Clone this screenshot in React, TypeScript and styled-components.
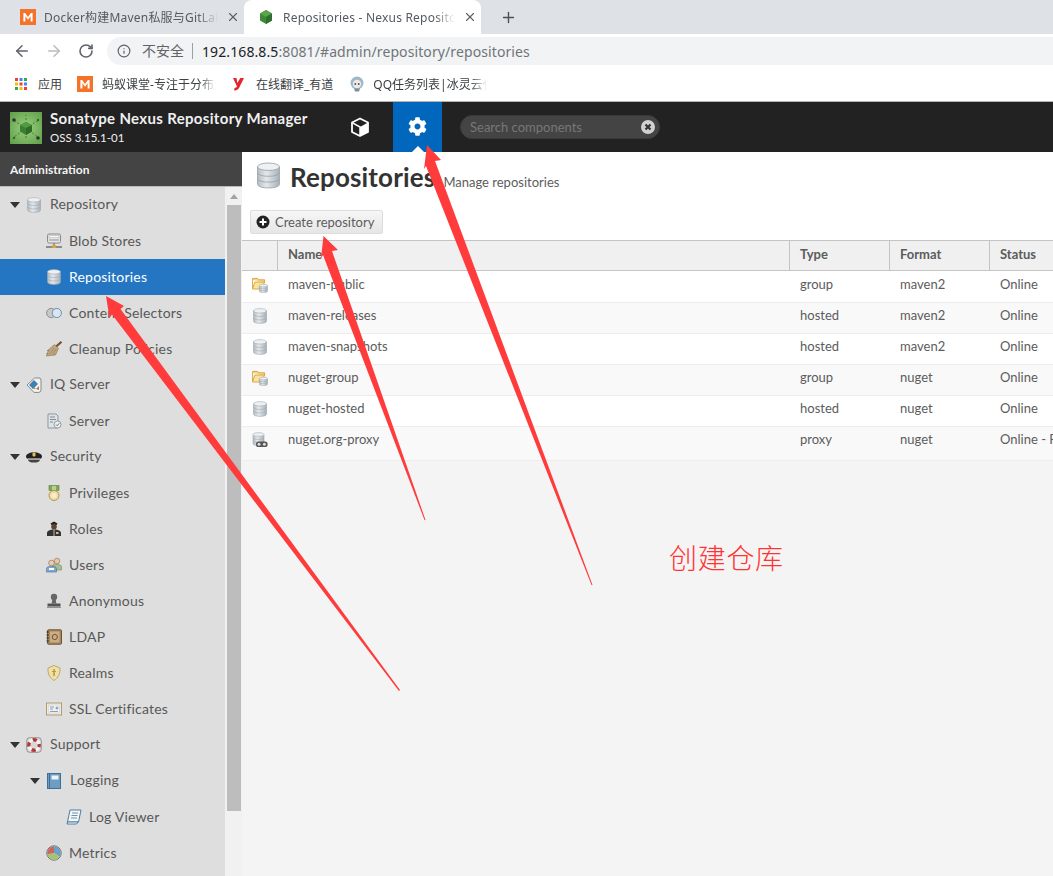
import React from "react";
import styled, { createGlobalStyle } from "styled-components";
import { ArrowLeft, ArrowRight, RotateCw, Info, X, Plus } from "lucide-react";
import { FaCog } from "react-icons/fa";

const Global = createGlobalStyle`
  html, body { margin: 0; padding: 0; background: #fff; overflow: hidden; }
  * { box-sizing: border-box; }
`;

const CHROME_FONT = `"Noto Sans", "Noto Sans CJK SC", sans-serif`;
const APP_FONT = `Lato, "Open Sans", sans-serif`;

const Page = styled.div`
  position: relative;
  width: 1053px;
  height: 876px;
  overflow: hidden;
  display: flex;
  flex-direction: column;
`;
const HiddenDefs = styled.svg`
  position: absolute;
  width: 0;
  height: 0;
`;

/* ---------- browser chrome ---------- */
const TabStrip = styled.div`
  height: 34px;
  background: #dee1e6;
  display: flex;
  align-items: stretch;
  font-family: ${CHROME_FONT};
`;
const Tab = styled.div<{ $active?: boolean }>`
  width: ${(p) => (p.$active ? 237 : 244)}px;
  padding-left: ${(p) => (p.$active ? 15 : 20)}px;
  display: flex;
  align-items: center;
  background: ${(p) => (p.$active ? "#fff" : "transparent")};
  border-radius: 8px 8px 0 0;
`;
const TabTitle = styled.span<{ $w: number; $ml: number }>`
  width: ${(p) => p.$w}px;
  margin-left: ${(p) => p.$ml}px;
  font-size: 12px;
  letter-spacing: 0.2px;
  color: #555a60;
  white-space: nowrap;
  overflow: hidden;
  mask-image: linear-gradient(to right, #000 88%, transparent);
`;
const TabClose = styled.span`
  display: flex;
  margin-left: 8px;
  color: #5f6368;
`;
const NewTab = styled.span`
  display: flex;
  align-items: center;
  margin-left: 19px;
  color: #4d5156;
`;
const Toolbar = styled.div`
  height: 33px;
  padding: 3px 0 2px 6px;
  background: #fff;
  display: flex;
  align-items: center;
  font-family: ${CHROME_FONT};
`;
const NavButton = styled.span<{ $dim?: boolean }>`
  width: 32px;
  display: flex;
  justify-content: center;
  color: ${(p) => (p.$dim ? "#b9bcc0" : "#5f6368")};
`;
const Omnibox = styled.div`
  flex: 1;
  height: 28px;
  margin-left: 5px;
  padding-left: 10px;
  background: #f1f3f4;
  border-radius: 14px 0 0 14px;
  display: flex;
  align-items: center;
  color: #5f6368;
`;
const Insecure = styled.span`
  margin-left: 11px;
  font-size: 14px;
  padding-right: 8px;
  border-right: 1px solid #9aa0a6;
  line-height: 16px;
`;
const UrlHost = styled.span`
  margin-left: 9px;
  font-size: 14px;
  letter-spacing: 0.1px;
  color: #202124;
`;
const UrlRest = styled.span`
  font-size: 14px;
  letter-spacing: 0.1px;
  color: #70757a;
`;
const Bookmarks = styled.div`
  height: 34px;
  padding-left: 15px;
  background: #fff;
  display: flex;
  align-items: center;
  font-family: ${CHROME_FONT};
`;
const Bookmark = styled.span<{ $ml: number; $w?: number; $fade?: boolean }>`
  display: block;
  margin-left: ${(p) => p.$ml}px;
  width: ${(p) => (p.$w ? `${p.$w}px` : "auto")};
  font-size: 12px;
  color: #3c4043;
  white-space: nowrap;
  overflow: hidden;
  ${(p) => (p.$fade ? "mask-image: linear-gradient(to right, #000 85%, transparent);" : "")}
`;
const BookmarkIcon = styled.span<{ $ml: number }>`
  display: flex;
  margin-left: ${(p) => p.$ml}px;
`;
const Divider = styled.div`
  height: 1px;
  background: #b4b4b4;
`;

/* ---------- nexus header ---------- */
const Header = styled.header`
  height: 50px;
  padding-left: 10px;
  background: #222;
  display: flex;
  align-items: stretch;
  font-family: ${APP_FONT};
`;
const LogoBox = styled.div`
  align-self: center;
  width: 32px;
  height: 32px;
  margin-top: 1px;
  display: flex;
`;
const Brand = styled.div`
  margin-left: 8px;
  width: 285px;
  display: flex;
  flex-direction: column;
  padding-top: 6px;
  color: #f0f0f0;
`;
const BrandName = styled.div`
  font-size: 15px;
  font-weight: 700;
  line-height: 20px;
  letter-spacing: 0.33px;
  white-space: nowrap;
`;
const BrandVersion = styled.div`
  font-size: 11.5px;
  line-height: 20px;
`;
const HeaderIcon = styled.div`
  width: 50px;
  display: flex;
  align-items: center;
  justify-content: center;
  color: #fff;
`;
const ActiveHeaderIcon = styled(HeaderIcon)`
  position: relative;
  width: 49px;
  margin-left: 8px;
  padding-bottom: 2px;
  background: #0067bd;
  &::after {
    content: "";
    position: absolute;
    left: 19px;
    bottom: 0;
    border: 6px solid transparent;
    border-top: 0;
    border-bottom-color: #fff;
  }
`;
const Search = styled.div`
  width: 200px;
  height: 24px;
  margin: 13px 0 0 18px;
  padding: 0 4px 0 9px;
  background: #444;
  border: 1px solid #3a3a3a;
  border-radius: 12px;
  display: flex;
  align-items: center;
  justify-content: space-between;
  color: #777;
  font-size: 13px;
`;
const ClearIcon = styled.span`
  display: flex;
`;

/* ---------- body ---------- */
const Body = styled.div`
  flex: 1;
  min-height: 0;
  display: flex;
  font-family: ${APP_FONT};
`;
const Sidebar = styled.aside`
  width: 242px;
  display: flex;
  flex-direction: column;
`;
const SideTitle = styled.div`
  height: 35px;
  padding: 1px 10px 0;
  display: flex;
  align-items: center;
  background: #444;
  color: #f4f4f4;
  font-size: 12px;
  font-weight: 700;
  border-bottom: 1px solid #bbb;
`;
const SideBody = styled.div`
  flex: 1;
  min-height: 0;
  display: flex;
`;
const Tree = styled.nav`
  width: 225px;
  background: #dedede;
  overflow: hidden;
`;
const TreeRow = styled.div<{ $pad: number; $selected?: boolean }>`
  height: 36px;
  padding-left: ${(p) => p.$pad}px;
  display: flex;
  align-items: center;
  background: ${(p) => (p.$selected ? "#2476c3" : "transparent")};
  color: ${(p) => (p.$selected ? "#fff" : "#585858")};
  font-size: 14px;
`;
const Caret = styled.span`
  width: 10px;
  margin-right: 6px;
  border-style: solid;
  border-width: 6px 5px 0;
  border-color: #333 transparent transparent;
`;
const NodeLabel = styled.span<{ $parent?: boolean }>`
  margin-left: ${(p) => (p.$parent ? 8 : 7)}px;
  padding-bottom: ${(p) => (p.$parent ? 4 : 2)}px;
  white-space: nowrap;
  letter-spacing: 0.2px;
`;
const Scrollbar = styled.div`
  flex: 1;
  background: #f1f1f1;
  display: flex;
  flex-direction: column;
  align-items: center;
  padding: 0 1px 0 2px;
`;
const ScrollUp = styled.span`
  margin: 7px 0 6px;
  border-style: solid;
  border-width: 0 4px 5px;
  border-color: transparent transparent #a3a3a3;
`;
const ScrollThumb = styled.div`
  width: 100%;
  height: 606px;
  background: #bdbdbd;
`;
const Main = styled.main`
  flex: 1;
  min-width: 0;
  background: #f4f4f4;
`;
const PageHead = styled.div`
  height: 88px;
  padding: 10px 0 0 8px;
  background: #fff;
`;
const TitleRow = styled.div`
  height: 48px;
  padding-left: 5px;
  display: flex;
  align-items: flex-start;
`;
const PageTitle = styled.h1`
  margin: 0 0 0 8px;
  font-size: 26px;
  line-height: 30px;
  font-weight: 700;
  letter-spacing: 0.15px;
  color: #333;
  white-space: nowrap;
`;
const PageSub = styled.span`
  margin: 12px 0 0 8px;
  font-size: 13px;
  line-height: 16px;
  color: #5c5c5c;
  white-space: nowrap;
`;
const CreateButton = styled.div`
  width: 133px;
  height: 24px;
  padding-left: 5px;
  display: flex;
  align-items: center;
  gap: 5px;
  background: linear-gradient(#f6f6f6, #e6e6e6);
  border: 1px solid #ddd;
  border-radius: 2px;
  color: #5c5c5c;
  font-size: 13px;
  white-space: nowrap;
`;
const GRID = "36px 512px 100px 100px 100px";
const TableHead = styled.div`
  height: 31px;
  display: grid;
  grid-template-columns: ${GRID};
  background: #f0f0f0;
  border-top: 1px solid #c4c4c4;
  border-bottom: 1px solid #c4c4c4;
`;
const HeadCell = styled.div`
  padding: 5px 10px 0;
  border-right: 1px solid #c4c4c4;
  color: #5c5c5c;
  font-size: 13px;
  font-weight: 700;
  &:last-child { border-right: 0; }
`;
const TableRow = styled.div<{ $odd: boolean; $h: number; $first: boolean }>`
  height: ${(p) => p.$h}px;
  padding-top: ${(p) => (p.$first ? 1 : 0)}px;
  display: grid;
  grid-template-columns: ${GRID};
  background: ${(p) => (p.$odd ? "#f9f9f9" : "#fff")};
  border-bottom: 1px solid #ededed;
`;
const Cell = styled.div`
  padding: 3px 10px 0;
  color: #5c5c5c;
  font-size: 13px;
  line-height: 18px;
  white-space: nowrap;
`;
const IconCell = styled.div`
  padding: 5px 0 0 10px;
  display: flex;
  align-items: flex-start;
`;

/* ---------- annotations ---------- */
const Annotations = styled.svg`
  position: absolute;
  left: 0;
  top: 0;
  pointer-events: none;
`;
const Caption = styled.div`
  position: absolute;
  left: 669px;
  top: 536px;
  color: #f33;
  font: 300 28px/42px "Noto Sans CJK SC", sans-serif;
  letter-spacing: 0.7px;
`;

/* ---------- icons ---------- */
const IconSvg = styled.svg<{ $size: number }>`
  width: ${(p) => p.$size}px;
  height: ${(p) => p.$size}px;
  flex: none;
  display: block;
`;
const Svg = ({ size = 16, children }: { size?: number; children: React.ReactNode }) => (
  <IconSvg $size={size} viewBox="0 0 16 16">{children}</IconSvg>
);

const Cylinder = ({ x = 2, y = 0.8, w = 12, h = 14.4 }: { x?: number; y?: number; w?: number; h?: number }) => {
  const ry = w * 0.17;
  const s = (h - 2 * ry) / 3;
  const c = ry * 1.33;
  return (
    <g>
      {[2, 1, 0].map((i) => (
        <path
          key={i}
          d={`M${x} ${y + ry + i * s}v${s}c0 ${c} ${w} ${c} ${w} 0v${-s}z`}
          fill="url(#dbg)"
          stroke="#9aa3ab"
          strokeWidth="0.5"
        />
      ))}
      <ellipse cx={x + w / 2} cy={y + ry} rx={w / 2} ry={ry} fill="#eef0f2" stroke="#9aa3ab" strokeWidth="0.5" />
    </g>
  );
};

const DbIcon = ({ size = 16 }: { size?: number }) => (
  <Svg size={size}>
    <Cylinder x={1.5} y={0.6} w={13} h={14.8} />
  </Svg>
);
const FolderDbIcon = () => (
  <Svg>
    <path d="M.6 3V1.400h5l1 1.400h6v2.400" fill="#f8d580" stroke="#d69f33" strokeWidth=".9" />
    <path d="M.6 3v9h9l3-7H3L.6 11" fill="#fbe39d" stroke="#d69f33" strokeWidth=".9" />
    <Cylinder x={7.4} y={7.2} w={8} h={8.4} />
  </Svg>
);
const ProxyIcon = () => (
  <Svg>
    <Cylinder x={1} y={0.6} w={11} h={13} />
    <rect x="4" y="9.400" width="11.600" height="5.600" rx="2.600" fill="#555" />
    <circle cx="7" cy="12.200" r="1.500" fill="#ddd" />
    <circle cx="12.400" cy="12.200" r="1.500" fill="#ddd" />
  </Svg>
);
const BlobIcon = () => (
  <Svg>
    <rect x="1.500" y="1" width="13" height="9" rx="1.500" fill="#e5e5e5" stroke="#8a8a8a" />
    <rect x="3" y="2.800" width="10" height="2" fill="#fafafa" stroke="#a8a8a8" strokeWidth=".5" />
    <rect x="3" y="6" width="10" height="2" fill="#bbb" />
    <path d="M8 10v3" stroke="#666" />
    <path d="M0 14h16" stroke="#555" strokeWidth="1.200" />
    <rect x="6" y="12" width="4" height="3" fill="#d7a63d" />
  </Svg>
);
const SelectorIcon = () => (
  <Svg>
    <circle cx="5.200" cy="8" r="4.600" fill="#c9c9c9" stroke="#8d8d8d" />
    <circle cx="10.800" cy="8" r="4.600" fill="#d8e6f3" stroke="#6f8fa9" />
  </Svg>
);
const BroomIcon = () => (
  <Svg>
    <path d="M9 6.500 15.500 .8" stroke="#7a4f28" strokeWidth="2.200" />
    <path d="M8.500 3.500 12.500 7.500 9.500 14 0 15 2 12.500.5 13 3 9.500 1 10z" fill="#bfa67e" stroke="#7b6546" strokeWidth=".5" />
    <path d="M4 13 8 7M7 13.500 10 8" stroke="#8f7a57" strokeWidth=".6" />
  </Svg>
);
const TagIcon = () => (
  <Svg>
    <path d="M1 8 8.500 1H14l1 2v11l-2 1.400H8z" fill="#f2f2f2" stroke="#8a8a8a" />
    <path d="M3 8l5-5 4 4-5 5z" fill="#3f7fb5" />
    <path d="M10 12l3-3v4z" fill="#b5763f" />
    <path d="M6 12l2-2 2 2" fill="#7aa75a" />
  </Svg>
);
const ReportIcon = () => (
  <Svg>
    <path d="M2 1h8l2 2v12H2z" fill="#dfe3e6" stroke="#8b98a3" />
    <path d="M4 4h5M4 6.500h6M4 9h3" stroke="#7d8a95" />
    <circle cx="11.500" cy="11.500" r="3.500" fill="#f1f1f1" stroke="#9a9a9a" />
    <path d="M10 11.500l1.200 1.300 2-2.500" stroke="#3f80b5" fill="none" />
  </Svg>
);
const HatIcon = () => (
  <Svg>
    <path d="M0 7C2 2 14 2 16 7c0 2-1 3-2 3H2C1 10 0 9 0 7z" fill="#222" />
    <path d="M2 10.400h12c0 2-2 3.100-6 3.100s-6-1.100-6-3.100z" fill="#444" />
    <rect x="6.500" y="3.500" width="3" height="4" rx="1" fill="#e3bc5f" />
    <path d="M1.500 9.800h13" stroke="#d9d3bf" strokeWidth=".9" />
  </Svg>
);
const MedalIcon = () => (
  <Svg>
    <rect x="3" y=".5" width="10" height="5" fill="#7fa75a" stroke="#5d7f3e" strokeWidth=".6" />
    <rect x="6" y="1" width="4" height="4" fill="#b8d08f" />
    <circle cx="8" cy="10.500" r="5" fill="#efdba6" stroke="#b4954d" />
    <circle cx="8" cy="10.500" r="2.600" fill="#f7edcd" />
  </Svg>
);
const OfficerIcon = () => (
  <Svg>
    <path d="M4.500 2.500 8 .5l3.500 2-1 1.500h-5z" fill="#222" />
    <circle cx="8" cy="5.700" r="2.800" fill="#5e4330" />
    <path d="M1 15v-3c0-2 3-3.500 7-3.500s7 1.500 7 3.500v3z" fill="#333" />
    <path d="M8 8.500v6.500" stroke="#ddd" strokeWidth=".8" />
    <rect x="10" y="11" width="2.500" height="2" fill="#e3bc5f" />
  </Svg>
);
const UsersIcon = () => (
  <Svg>
    <circle cx="11" cy="4" r="2.800" fill="#e9c7a4" stroke="#8c6a4c" strokeWidth=".6" />
    <path d="M7 13V9.500C7 8 9 7.500 11 7.500s4.500.5 4.500 2V13z" fill="#a9c08f" stroke="#6f8a56" strokeWidth=".6" />
    <circle cx="5.500" cy="6" r="2.800" fill="#eccdb0" stroke="#8c6a4c" strokeWidth=".6" />
    <path d="M.5 15v-3.500c0-1.500 2.500-2.200 5-2.200s5 .7 5 2.200V15z" fill="#7ea8d2" stroke="#476f96" strokeWidth=".6" />
    <rect x="3" y="11" width="5" height="2" fill="#fff" />
  </Svg>
);
const StampIcon = () => (
  <Svg>
    <circle cx="8" cy="4" r="3.200" fill="#666" />
    <path d="M6.300 6.500h3.400l.6 4H5.700z" fill="#666" />
    <path d="M1.500 10.500h13V13.500h-13z" fill="#555" />
    <path d="M1 14.300h14" stroke="#888" strokeWidth="1.200" />
  </Svg>
);
const AddressIcon = () => (
  <Svg>
    <rect x="1.500" y=".8" width="14" height="14.400" rx="1" fill="#a9865a" stroke="#6e5433" />
    <rect x="4" y="2.500" width="9.500" height="11" fill="#c9ad85" />
    <circle cx="8.800" cy="8" r="2.600" fill="none" stroke="#6e5433" />
    <path d="M.5 3h2.500M.5 6h2.500M.5 9h2.500M.5 12h2.500" stroke="#333" />
  </Svg>
);
const ShieldIcon = () => (
  <Svg>
    <path d="M8 .5 14 3c.4 6-2 10-6 12.500C4 13 1.600 9 2 3z" fill="#efdfa8" stroke="#c1a860" />
    <path d="M8 4v7" stroke="#b79b49" strokeWidth="1.600" />
    <path d="M6 6.500h4" stroke="#b79b49" />
  </Svg>
);
const CertIcon = () => (
  <Svg>
    <rect x=".5" y="2" width="15" height="12" fill="#f3e9d8" stroke="#ad9b7c" />
    <rect x="2.500" y="4" width="11" height="8" fill="#eef2f5" stroke="#c9ccd0" strokeWidth=".5" />
    <path d="M4 6h4M4 8h3M4 10.500h8" stroke="#6d8ca7" strokeWidth=".8" />
    <circle cx="11" cy="7" r="1.500" fill="#8fa8bd" />
  </Svg>
);
const BuoyIcon = () => (
  <Svg>
    <rect x=".7" y=".7" width="14.600" height="14.600" rx="3" fill="#d8d8d8" stroke="#777" strokeWidth=".7" />
    <circle cx="8" cy="8" r="5.200" fill="none" stroke="#f3f3f3" strokeWidth="3.400" />
    <circle cx="8" cy="8" r="5.200" fill="none" stroke="#b03a3a" strokeWidth="3.400" strokeDasharray="4.200 4" strokeDashoffset="2" />
  </Svg>
);
const BookIcon = () => (
  <Svg>
    <rect x="1.500" y=".5" width="13" height="15" fill="#6d9dc2" stroke="#3f6f94" />
    <path d="M3.500 1v14" stroke="#3f6f94" />
    <rect x="5.500" y="2.500" width="7" height="4" fill="#eef3f7" />
  </Svg>
);
const ScrollIcon = () => (
  <Svg>
    <path d="M4 1h11l-2.500 12H1.500z" fill="#f4f6f8" stroke="#4d7da0" />
    <path d="M1 15h9.500l1.500-2H1.500z" fill="#fff" stroke="#4d7da0" />
    <path d="M6 4h6M5.500 6.500h6M5 9h6" stroke="#6f93ad" />
  </Svg>
);
const PieIcon = () => (
  <Svg>
    <circle cx="8" cy="8" r="7.200" fill="#eee" stroke="#6e6e6e" />
    <path d="M8 8V1.300A6.700 6.700 0 0 1 13.500 11.800z" fill="#6ca0c8" />
    <path d="M8 8 13.500 11.800A6.700 6.700 0 0 1 1.500 9.300z" fill="#a5c46f" />
    <path d="M8 8 1.500 9.300A6.700 6.700 0 0 1 8 1.300z" fill="#c9665e" />
  </Svg>
);
const OrangeM = () => (
  <IconSvg $size={16} viewBox="0 0 16 16">
    <rect width="16" height="16" fill="#f5722a" />
    <path d="M3.400 12.500V4h1.700L8 8l2.900-4h1.700v8.500h-2V7.300L8 10.800 5.400 7.300v5.200z" fill="#fff" />
  </IconSvg>
);
const NexusHex = () => (
  <IconSvg $size={14} viewBox="0 0 14 14">
    <path d="M7 0l6 3.500v7L7 14l-6-3.500v-7z" fill="#3f8a3a" />
    <path d="M7 7l6-3.500L7 0 1 3.500z" fill="#5aa44c" />
    <path d="M7 7v7l6-3.500v-7z" fill="#2f6f30" />
  </IconSvg>
);
const AppsGrid = () => {
  const colors = ["#ea4335", "#4285f4", "#34a853", "#fbbc05", "#ea4335", "#4285f4", "#34a853", "#fbbc05", "#ea4335"];
  return (
    <IconSvg $size={12} viewBox="0 0 12 12">
      {colors.map((c, i) => (
        <rect key={i} x={(i % 3) * 4.5} y={Math.floor(i / 3) * 4.5} width="3" height="3" fill={c} />
      ))}
    </IconSvg>
  );
};
const YoudaoY = () => (
  <IconSvg $size={14} viewBox="0 0 14 14">
    <path d="M1 1h3.500l.8 5 3-5H12L8 9c-1 3-3 4.500-6 4.500l.5-2.500c1 0 2-.4 2.500-1.400z" fill="#e3262e" />
  </IconSvg>
);
const AvatarIcon = () => (
  <IconSvg $size={16} viewBox="0 0 16 16">
    <circle cx="8" cy="7" r="6.500" fill="#9db7c9" />
    <circle cx="8" cy="8" r="4.200" fill="#f1e9e4" />
    <circle cx="6.300" cy="8" r=".9" fill="#33566e" />
    <circle cx="9.700" cy="8" r=".9" fill="#33566e" />
    <path d="M5 12.500h6l-1 3H6z" fill="#7f8f9c" />
  </IconSvg>
);
const NexusLogo = () => (
  <IconSvg $size={32} viewBox="0 0 32 32">
    <defs>
      <radialGradient id="lg" cx="50%" cy="50%" r="70%">
        <stop offset="0" stopColor="#9bd07f" />
        <stop offset="1" stopColor="#5f9e48" />
      </radialGradient>
    </defs>
    <rect width="32" height="32" fill="url(#lg)" />
    <path d="M16 16V3M16 16 3 8M16 16 29 8M16 16 3 26M16 16 29 26M16 16v12" stroke="#2f6b28" strokeWidth=".8" strokeDasharray="2 2" />
    <circle cx="4" cy="8" r="1.800" fill="#333" />
    <circle cx="28" cy="26" r="1.800" fill="#333" />
    <circle cx="28" cy="8" r="1.200" fill="#2f6b28" />
    <circle cx="4" cy="26" r="1.200" fill="#2f6b28" />
    <path d="M16 10l6 3.200v6.400L16 23l-6-3.400v-6.400z" fill="#3c7f32" />
    <path d="M16 16l6-2.800L16 10l-6 3.200z" fill="#4f9a42" />
    <path d="M16 16v7l6-3.400v-6.400z" fill="#2f6b28" />
  </IconSvg>
);
const CubeIcon = () => (
  <IconSvg $size={20} viewBox="0 0 20 20">
    <path d="M10 1.500 18 5.500v9.500L10 19 2 15V5.500z" fill="none" stroke="#fff" strokeWidth="1.800" strokeLinejoin="round" />
    <path d="M10 10 18 5.500V15L10 19z" fill="#fff" />
    <path d="M2.500 5.800 10 10v8.500" fill="none" stroke="#fff" strokeWidth="1.500" />
  </IconSvg>
);
const ClearGlyph = () => (
  <IconSvg $size={14} viewBox="0 0 14 14">
    <circle cx="7" cy="7" r="7" fill="#d0d0d0" />
    <path d="M4.500 4.500l5 5M9.500 4.500l-5 5" stroke="#333" strokeWidth="2.200" />
  </IconSvg>
);
const PlusCircle = () => (
  <IconSvg $size={14} viewBox="0 0 14 14">
    <circle cx="7" cy="7" r="6.500" fill="#222" />
    <path d="M7 3.500v7M3.500 7h7" stroke="#fff" strokeWidth="2" />
  </IconSvg>
);

/* ---------- data ---------- */
type Node = { label: string; icon: React.ReactNode; pad: number; parent?: boolean; selected?: boolean };
const tree: Node[] = [
  { label: "Repository", icon: <DbIcon />, pad: 10, parent: true },
  { label: "Blob Stores", icon: <BlobIcon />, pad: 46 },
  { label: "Repositories", icon: <DbIcon />, pad: 46, selected: true },
  { label: "Content Selectors", icon: <SelectorIcon />, pad: 46 },
  { label: "Cleanup Policies", icon: <BroomIcon />, pad: 46 },
  { label: "IQ Server", icon: <TagIcon />, pad: 10, parent: true },
  { label: "Server", icon: <ReportIcon />, pad: 46 },
  { label: "Security", icon: <HatIcon />, pad: 10, parent: true },
  { label: "Privileges", icon: <MedalIcon />, pad: 46 },
  { label: "Roles", icon: <OfficerIcon />, pad: 46 },
  { label: "Users", icon: <UsersIcon />, pad: 46 },
  { label: "Anonymous", icon: <StampIcon />, pad: 46 },
  { label: "LDAP", icon: <AddressIcon />, pad: 46 },
  { label: "Realms", icon: <ShieldIcon />, pad: 46 },
  { label: "SSL Certificates", icon: <CertIcon />, pad: 46 },
  { label: "Support", icon: <BuoyIcon />, pad: 10, parent: true },
  { label: "Logging", icon: <BookIcon />, pad: 30, parent: true },
  { label: "Log Viewer", icon: <ScrollIcon />, pad: 66 },
  { label: "Metrics", icon: <PieIcon />, pad: 46 },
];
const rows: [React.ReactNode, string, string, string, string][] = [
  [<FolderDbIcon />, "maven-public", "group", "maven2", "Online"],
  [<DbIcon />, "maven-releases", "hosted", "maven2", "Online"],
  [<DbIcon />, "maven-snapshots", "hosted", "maven2", "Online"],
  [<FolderDbIcon />, "nuget-group", "group", "nuget", "Online"],
  [<DbIcon />, "nuget-hosted", "hosted", "nuget", "Online"],
  [<ProxyIcon />, "nuget.org-proxy", "proxy", "nuget", "Online - Remote Available"],
];
const arrows = [
  "106,296 124,306 120.500,309 400,690 399,691 112,314.500 109.500,318",
  "323.500,236 338,250 332,251 425.500,520 424.500,520 323,255 321,258",
  "427,145 441,160 435,161 592.500,585 591.500,585 426,166 424,169",
];

export default function App() {
  return (
    <Page>
      <Global />
      <HiddenDefs>
        <defs>
          <linearGradient id="dbg" x1="0" x2="1" y1="0" y2="0">
            <stop offset="0" stopColor="#b4bcc3" />
            <stop offset=".4" stopColor="#e4e8eb" />
            <stop offset="1" stopColor="#a8b1b9" />
          </linearGradient>
        </defs>
      </HiddenDefs>

      <TabStrip>
        <Tab>
          <OrangeM />
          <TabTitle $w={174} $ml={8}>Docker构建Maven私服与GitLab私服</TabTitle>
          <TabClose><X size={14} /></TabClose>
        </Tab>
        <Tab $active>
          <NexusHex />
          <TabTitle $w={172} $ml={10}>Repositories - Nexus Repository Manager</TabTitle>
          <TabClose><X size={14} /></TabClose>
        </Tab>
        <NewTab><Plus size={17} /></NewTab>
      </TabStrip>

      <Toolbar>
        <NavButton><ArrowLeft size={18} /></NavButton>
        <NavButton $dim><ArrowRight size={18} /></NavButton>
        <NavButton><RotateCw size={16} strokeWidth={2.4} /></NavButton>
        <Omnibox>
          <Info size={14} />
          <Insecure>不安全</Insecure>
          <UrlHost>192.168.8.5</UrlHost>
          <UrlRest>:8081/#admin/repository/repositories</UrlRest>
        </Omnibox>
      </Toolbar>

      <Bookmarks>
        <AppsGrid />
        <Bookmark $ml={11}>应用</Bookmark>
        <BookmarkIcon $ml={15}><OrangeM /></BookmarkIcon>
        <Bookmark $ml={9} $w={114} $fade>蚂蚁课堂-专注于分布式架构</Bookmark>
        <BookmarkIcon $ml={16}><YoudaoY /></BookmarkIcon>
        <Bookmark $ml={10}>在线翻译_有道</Bookmark>
        <BookmarkIcon $ml={16}><AvatarIcon /></BookmarkIcon>
        <Bookmark $ml={8} $w={114} $fade>QQ任务列表|冰灵云任务</Bookmark>
      </Bookmarks>
      <Divider />

      <Header>
        <LogoBox><NexusLogo /></LogoBox>
        <Brand>
          <BrandName>Sonatype Nexus Repository Manager</BrandName>
          <BrandVersion>OSS 3.15.1-01</BrandVersion>
        </Brand>
        <HeaderIcon><CubeIcon /></HeaderIcon>
        <ActiveHeaderIcon><FaCog size={19} /></ActiveHeaderIcon>
        <Search>
          Search components
          <ClearIcon><ClearGlyph /></ClearIcon>
        </Search>
      </Header>

      <Body>
        <Sidebar>
          <SideTitle>Administration</SideTitle>
          <SideBody>
            <Tree>
              {tree.map((n) => (
                <TreeRow key={n.label} $pad={n.pad} $selected={n.selected}>
                  {n.parent && <Caret />}
                  {n.icon}
                  <NodeLabel $parent={n.parent}>{n.label}</NodeLabel>
                </TreeRow>
              ))}
            </Tree>
            <Scrollbar>
              <ScrollUp />
              <ScrollThumb />
            </Scrollbar>
          </SideBody>
        </Sidebar>
        <Main>
          <PageHead>
            <TitleRow>
              <DbIcon size={27} />
              <PageTitle>Repositories</PageTitle>
              <PageSub>Manage repositories</PageSub>
            </TitleRow>
            <CreateButton><PlusCircle />Create repository</CreateButton>
          </PageHead>
          <TableHead>
            <HeadCell />
            <HeadCell>Name</HeadCell>
            <HeadCell>Type</HeadCell>
            <HeadCell>Format</HeadCell>
            <HeadCell>Status</HeadCell>
          </TableHead>
          {rows.map((r, i) => (
            <TableRow key={r[1]} $odd={i % 2 === 1} $first={i === 0} $h={i === 0 ? 32 : i === 5 ? 34 : 31}>
              <IconCell>{r[0]}</IconCell>
              <Cell>{r[1]}</Cell>
              <Cell>{r[2]}</Cell>
              <Cell>{r[3]}</Cell>
              <Cell>{r[4]}</Cell>
            </TableRow>
          ))}
        </Main>
      </Body>

      <Annotations width="1053" height="876" viewBox="0 0 1053 876">
        {arrows.map((p) => (
          <polygon key={p} points={p} fill="#ff3b3b" />
        ))}
      </Annotations>
      <Caption>创建仓库</Caption>
    </Page>
  );
}
